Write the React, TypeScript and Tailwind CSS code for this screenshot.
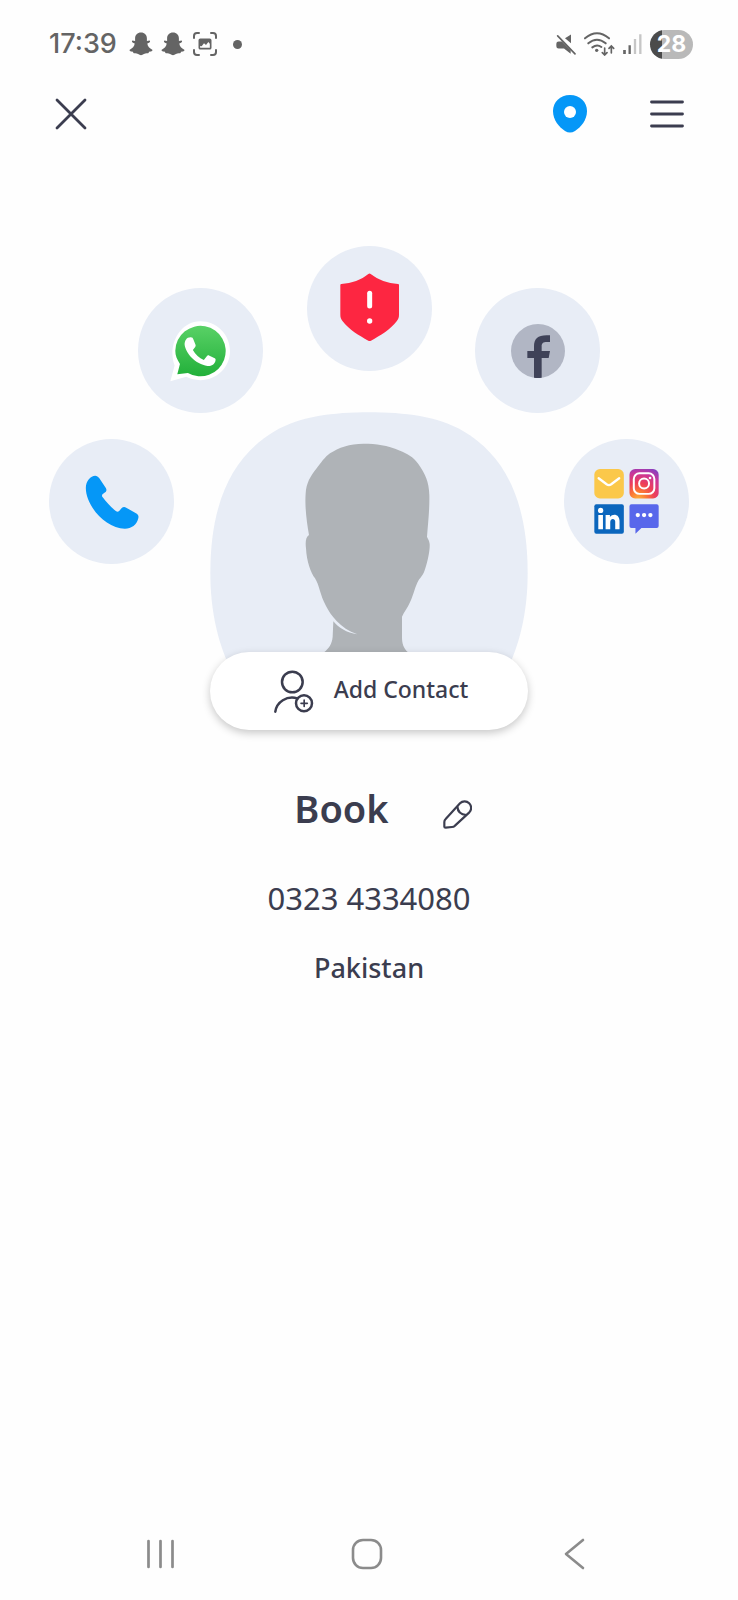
import React from 'react';

const SnapIcon: React.FC = () => (
  <svg width="24" height="24" viewBox="0 0 24 24" fill="currentColor" aria-hidden="true">
    <path d="M12 .6C8.4.6 6.1 3 6.1 6.4V9L3.4 8.6c-1 .8-.6 2 2.3 3C5.4 14.2 3.4 16.6.7 17.8c-.6.8.2 1.6 3.3 2 .2.8.3 1.3.9 1.5 1.6-.3 2.8-.2 4.2.8 1.9 1.4 3.9 1.4 5.8 0 1.4-1 2.6-1.1 4.2-.8.6-.2.7-.7.9-1.5 3.1-.4 3.9-1.2 3.3-2-2.7-1.2-4.7-3.6-5-6.2 2.9-1 3.3-2.2 2.3-3L17.9 9V6.4C17.9 3 15.6.6 12 .6Z" />
  </svg>
);

const CaptureIcon: React.FC = () => (
  <svg width="24" height="24" viewBox="488 66 72 72" fill="none" stroke="currentColor" strokeWidth="6" strokeLinecap="round" aria-hidden="true">
    <path d="M491 84v-6q0-9 9-9h6M542 69h6q9 0 9 9v6M557 120v6q0 9-9 9h-6M506 135h-6q-9 0-9-9v-6" />
    <rect x="507" y="88" width="34" height="28" rx="3" strokeWidth="5" />
    <path d="M508 107V89h32v14l-6-7-7 9-6-5-7 9Z" fill="currentColor" stroke="none" />
  </svg>
);

const MuteIcon: React.FC = () => (
  <svg width="20" height="21" viewBox="80 70 60 62" fill="currentColor" aria-hidden="true">
    <path d="M125 71v26l-18-15Z" />
    <path d="M81 99q0-7 7-7h10l26 26v11l-20-16H88q-7 0-7-7Z" />
    <path d="m85 75 52 54" stroke="currentColor" strokeWidth="5" strokeLinecap="round" />
  </svg>
);

const WifiIcon: React.FC = () => (
  <svg width="31" height="24" viewBox="170 63 93 72" fill="none" stroke="currentColor" strokeWidth="6" strokeLinecap="round" aria-hidden="true">
    <path d="M173 82q36-30 72 0M183 97q26-22 52 0M195 109q14-10 27-1" />
    <circle cx="208" cy="118" r="5" fill="currentColor" stroke="none" />
    <path d="M232 111v20m-7-6 7 7 7-7M252 126v-20m-7 6 7-7 7 7" strokeWidth="5" />
  </svg>
);

const SignalIcon: React.FC = () => (
  <svg width="19" height="20" viewBox="282 70 56 60" aria-hidden="true">
    <path d="M282 118h8v12h-8zM298 104h7v26h-7z" fill="#666" />
    <path d="M314 85h7v45h-7zM330 71h7v59h-7z" fill="#c6c6c6" />
  </svg>
);

const PhoneIcon: React.FC = () => (
  <svg width="54" height="54" viewBox="133 133 161 162" fill="#0597f7" aria-hidden="true">
    <path d="M135 172C135 150 150 135 163 135c5 0 9 3 12 7l20 30c3 5 2 10-2 13l-8 6c-2 3-2 5 0 8 12 16 25 30 41 43 3 2 6 2 9-1l7-8c4-4 9-5 14-2l32 18c5 4 6 9 4 15-4 17-20 30-40 30-58 0-117-69-117-122Z" />
  </svg>
);

const WhatsAppIcon: React.FC = () => (
  <svg width="61" height="62" viewBox="118 237 184 186" aria-hidden="true">
    <defs>
      <linearGradient id="wa" x1="0" y1="0" x2="0" y2="1">
        <stop offset="0" stopColor="#59d166" />
        <stop offset="1" stopColor="#22b03a" />
      </linearGradient>
    </defs>
    <path d="M119 421l13-47C109 314 147 240 209 240c50 0 90 40 90 90 0 67-71 108-132 78Z" fill="#fff" />
    <path d="m140 400 8-31c-9-15-14-25-14-40a76 76 0 1 1 38 67Z" fill="url(#wa)" />
    <path d="M166 296c4-6 10-8 17-7 3 0 4 2 5 5l7 17c1 3 0 5-1 7l-7 9c8 15 19 24 33 30l9-11c2-3 4-4 8-2l16 8c3 2 3 4 2 8-2 10-13 16-24 15-36-4-67-39-69-65 0-6 2-11 4-14Z" fill="#fff" />
  </svg>
);

const ShieldIcon: React.FC = () => (
  <svg width="59" height="68" viewBox="27 26 177 204" aria-hidden="true">
    <path d="M112 29q4-3 7 0c23 18 51 28 82 30q3 0 3 3v89c0 9-2 13-7 20-19 25-49 43-77 58q-4 2-8 0c-28-15-58-33-77-58-5-7-7-11-7-20V62q0-3 3-3c31-2 60-12 81-30Z" fill="#fd2641" />
    <path d="M116 87v38" stroke="#fff" strokeWidth="15" strokeLinecap="round" />
    <circle cx="116" cy="170" r="8" fill="#fff" />
  </svg>
);

const FacebookIcon: React.FC = () => (
  <svg width="54" height="54" viewBox="153 132 162 162" aria-hidden="true">
    <circle cx="234" cy="213" r="81" fill="#b1b6c4" />
    <path d="M222 293v-59h-20v-21h20v-14c0-25 14-36 48-33v20h-9c-12 0-16 4-16 13v14h25l-4 21h-21v59q-12 2-23 0Z" fill="#3f4258" />
  </svg>
);

const MoreAppsIcon: React.FC = () => (
  <svg width="65" height="65" viewBox="403 567 196 196" aria-hidden="true">
    <defs>
      <radialGradient id="ig" cx=".3" cy="1.05" r="1.15">
        <stop offset="0" stopColor="#fdb63c" />
        <stop offset=".25" stopColor="#fb7a35" />
        <stop offset=".5" stopColor="#ee3f57" />
        <stop offset=".8" stopColor="#c9359b" />
        <stop offset="1" stopColor="#8a3fbd" />
      </radialGradient>
    </defs>
    <rect x="404" y="567" width="89" height="89" rx="17" fill="#fbc84a" />
    <path d="m417 595 24 18q7 5 14 0l24-18" fill="none" stroke="#fff" strokeWidth="7" strokeLinecap="round" />
    <rect x="510" y="567" width="88" height="89" rx="17" fill="url(#ig)" />
    <g fill="none" stroke="#fff" strokeWidth="6">
      <rect x="523" y="580" width="62" height="62" rx="17" />
      <circle cx="554" cy="611" r="15" />
    </g>
    <circle cx="572" cy="594" r="4" fill="#fff" />
    <rect x="404" y="673" width="89" height="89" rx="6" fill="#0b66bd" />
    <circle cx="423" cy="692" r="8" fill="#fff" />
    <path d="M416 706h14v43h-14zM438 706h13v6c9-12 29-9 29 12v25h-13v-23c0-11-15-11-15 1v22h-14Z" fill="#fff" />
    <path d="M516 673h76q6 0 6 6v60q0 6-6 6h-46l-18 17v-17h-12q-6 0-6-6v-60q0-6 6-6Z" fill="#5867eb" />
    <path d="M535 706h.1M554 706h.1M573 706h.1" stroke="#fff" strokeWidth="13" strokeLinecap="round" />
  </svg>
);

const Avatar: React.FC = () => (
  <svg className="w-full" viewBox="30 36 954 768" role="img" aria-label="Contact picture">
    <path d="M31 520C31 300 101 165 225 93 301 49 400 37 507 37s206 12 282 56c124 72 194 207 194 427 0 120-26 215-59 284H90C57 735 31 640 31 520Z" fill="#e8edf6" />
    <path d="M490 131C450 131 415 143 390 160 375 170 362 190 350 205 330 230 319 250 317 280 314 320 320 365 327 405 316 412 316 430 318 445 320 485 332 518 345 535 358 555 360 585 378 618 392 645 420 685 472 703 440 699 415 682 400 664L398 710C396 733 386 745 372 757V803H624V757C610 745 606 730 606 712V650C612 637 622 625 630 607 642 580 645 560 655 542 662 532 670 525 675 508 684 480 690 450 689 432 688 420 684 418 681 410 684 370 689 330 688 285 687 245 675 220 655 192 640 170 620 160 600 152 560 135 530 131 490 131Z" fill="#afb3b7" />
  </svg>
);

const AddPersonIcon: React.FC = () => (
  <svg width="40" height="43" viewBox="68 86 120 129" fill="none" stroke="#3b3d4f" strokeWidth="7.5" strokeLinecap="round" aria-hidden="true">
    <circle cx="123" cy="122" r="31" />
    <path d="M72 211c4-29 34-49 66-40" />
    <circle cx="158" cy="186" r="24" />
    <path d="M149 186h19M158.5 176.5v19" strokeWidth="5" />
  </svg>
);

const PencilIcon: React.FC = () => (
  <svg width="29" height="29" viewBox="20 17 87 87" fill="none" stroke="#3b3d4f" strokeWidth="6.5" strokeLinejoin="round" aria-hidden="true">
    <path d="M24 97V83q0-5 4-9L71 27a19 19 0 0 1 28 27L56 94q-4 4-9 4l-19 2q-4 0-4-3Z" />
    <path d="M63 36c1 14 10 25 27 26" />
  </svg>
);

const ContactBubble: React.FC<{ label: string; className?: string; children: React.ReactNode }> = ({ label, className = '', children }) => (
  <button aria-label={label} className={`flex size-[125px] shrink-0 items-center justify-center rounded-full bg-[#e8edf6] ${className}`}>
    {children}
  </button>
);

const StatusBar: React.FC = () => (
  <div className="flex h-22 items-center justify-between pr-[45px] pl-[49px] text-[#646464]">
    <div className="flex items-center gap-2">
      <time className="mr-1 font-[Inter,sans-serif] text-[27px] leading-8 font-medium">17:39</time>
      <SnapIcon />
      <SnapIcon />
      <CaptureIcon />
      <span className="ml-2 size-[9px] rounded-full bg-[#646464]" />
    </div>
    <div className="flex items-center gap-2">
      <MuteIcon />
      <WifiIcon />
      <SignalIcon />
      <span className="flex h-[29px] w-[43px] items-center justify-center rounded-full bg-linear-to-r from-[#4b4b4b] from-28% to-[#b9b9b9] to-28% font-[Inter,sans-serif] text-[23px] leading-none font-bold text-white">
        28
      </span>
    </div>
  </div>
);

const Header: React.FC = () => (
  <header className="flex h-[52px] items-center justify-between px-[54px]">
    <button aria-label="Close">
      <svg width="34" height="34" viewBox="0 0 34 34" stroke="#3b3d4f" strokeWidth="2.8" strokeLinecap="round" aria-hidden="true">
        <path d="m3 3 28 28M31 3 3 31" />
      </svg>
    </button>
    <div className="flex items-center gap-[63px]">
      <button aria-label="Location">
        <svg width="34" height="38" viewBox="0 0 34 38" aria-hidden="true">
          <path d="M17 0C7 0 0 7 0 16c0 9 6 16 12 20q5 3 10 0c6-4 12-11 12-20C34 7 27 0 17 0Z" fill="#0597f7" />
          <circle cx="17" cy="17" r="6" fill="#fff" />
        </svg>
      </button>
      <button aria-label="Menu">
        <svg width="34" height="28" viewBox="0 0 34 28" stroke="#3b3d4f" strokeWidth="2.8" strokeLinecap="round" aria-hidden="true">
          <path d="M1.5 2h31M1.5 14h31M1.5 26h31" />
        </svg>
      </button>
    </div>
  </header>
);

const SystemNav: React.FC = () => (
  <nav aria-label="System" className="mt-auto flex items-center justify-between pr-[149px] pl-[145px] pb-[30px]">
    <button aria-label="Recent apps">
      <svg width="32" height="32" viewBox="0 0 32 32" stroke="#8b8b8b" strokeWidth="2.7" strokeLinecap="round" aria-hidden="true">
        <path d="M3.5 3v26M15.5 3v26M27.5 3v26" />
      </svg>
    </button>
    <button aria-label="Home">
      <svg width="32" height="32" viewBox="0 0 32 32" fill="none" stroke="#8b8b8b" strokeWidth="2.6" aria-hidden="true">
        <rect x="2" y="2" width="28" height="28" rx="10" />
      </svg>
    </button>
    <button aria-label="Back">
      <svg width="32" height="32" viewBox="0 0 32 32" fill="none" stroke="#8b8b8b" strokeWidth="2.6" strokeLinecap="round" strokeLinejoin="round" aria-hidden="true">
        <path d="M26 2 9 16l17 14" />
      </svg>
    </button>
  </nav>
);

export default function App() {
  return (
    <div className="flex min-h-screen flex-col bg-[#fefefe] font-['Noto_Sans',sans-serif] text-[#3b3d4f]">
      <StatusBar />
      <Header />

      <main className="flex flex-col items-center pt-[106px]">
        {/* Contact channels fan out around the avatar */}
        <ContactBubble label="Report spam" className="pb-1">
          <ShieldIcon />
        </ContactBubble>
        <div className="-mt-[83px] flex w-full max-w-[462px] justify-between">
          <ContactBubble label="WhatsApp">
            <WhatsAppIcon />
          </ContactBubble>
          <ContactBubble label="Facebook">
            <FacebookIcon />
          </ContactBubble>
        </div>
        <div className="flex w-full max-w-[640px] items-start justify-between">
          <ContactBubble label="Call" className="mt-[26px]">
            <PhoneIcon />
          </ContactBubble>
          <div className="-mt-px w-[318px]">
            <Avatar />
            <button className="relative -mt-4 flex h-[78px] w-full items-center justify-center gap-5 rounded-full bg-white pl-1 text-[23px] font-medium shadow-[0_3px_8px_rgba(0,0,0,0.22)]">
              <AddPersonIcon />
              <span className="pb-1">Add Contact</span>
            </button>
          </div>
          <ContactBubble label="More apps" className="mt-[26px]">
            <MoreAppsIcon />
          </ContactBubble>
        </div>

        <div className="mt-[52px] flex items-center gap-[54px] pl-[28px]">
          <h1 className="text-[38px] leading-[52px] font-semibold">Book</h1>
          <button aria-label="Edit name" className="pt-3">
            <PencilIcon />
          </button>
        </div>
        <p className="mt-[42px] text-[31px] leading-[44px]">0323 4334080</p>
        <p className="mt-[30px] text-[27px] leading-[36px] font-medium">Pakistan</p>
      </main>

      <SystemNav />
    </div>
  );
}
